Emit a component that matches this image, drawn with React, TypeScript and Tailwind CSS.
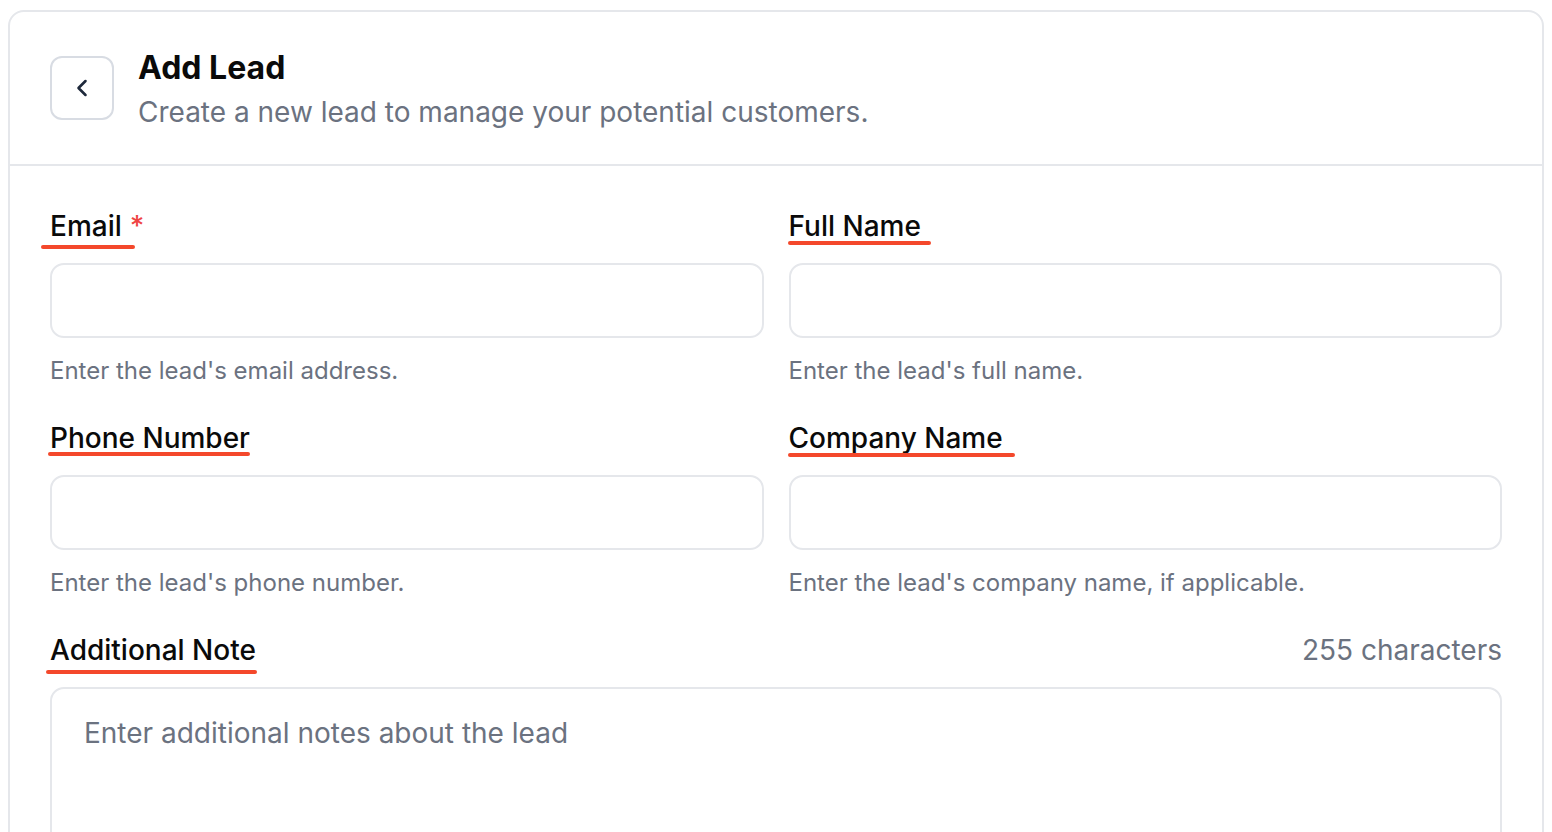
import { ChevronLeft } from 'lucide-react'

type FieldProps = {
  label: string
  helper: string
  required?: boolean
  mark: string
}

// hand-drawn red annotation under a label
function Mark({ className }: { className: string }) {
  return <span className={`absolute h-[4px] rounded-full bg-[#f4482b] ${className}`} />
}

function Field({ label, helper, required, mark }: FieldProps) {
  return (
    <div className="flex flex-col">
      <div className="relative self-start">
        <label className="block text-[28px] leading-[36px] font-medium text-[#0a0a0a]">
          {label}
          {required && <span className="ml-[8px] text-[#ef4444]">*</span>}
        </label>
        <Mark className={mark} />
      </div>
      <input className="mt-[19px] h-[75px] w-full rounded-[14px] border-2 border-[#e5e7eb] bg-white px-[24px] text-[26px] outline-none" />
      <p className="mt-[17px] text-[24px] leading-[32px] text-[#6b7280]">{helper}</p>
    </div>
  )
}

export default function App() {
  return (
    <div className="min-h-screen bg-white px-[8px] pt-[10px] font-['Inter',sans-serif]">
      <div className="rounded-[16px] border-2 border-[#e5e7eb] bg-white">
        {/* Header */}
        <div className="flex gap-[24px] border-b-2 border-[#e5e7eb] px-[40px] pt-[36px] pb-[32px]">
          <button className="mt-[8px] flex h-[64px] w-[64px] shrink-0 items-center justify-center rounded-[12px] border-2 border-[#d8dce3] text-[#1e293b]">
            <ChevronLeft size={28} strokeWidth={2.2} />
          </button>
          <div>
            <h1 className="text-[32px] leading-[40px] font-bold text-[#0a0a0a]">Add Lead</h1>
            <p className="mt-[4px] text-[28px] leading-[40px] text-[#6b7280]">
              Create a new lead to manage your potential customers.
            </p>
          </div>
        </div>

        {/* Form */}
        <div className="px-[40px] pt-[42px]">
          <div className="grid grid-cols-2 gap-x-[25px] gap-y-[33px]">
            <Field
              label="Email"
              required
              helper="Enter the lead's email address."
              mark="-left-[9px] w-[94px] top-[37px]"
            />
            <Field
              label="Full Name"
              helper="Enter the lead's full name."
              mark="-left-[1px] w-[143px] top-[33px]"
            />
            <Field
              label="Phone Number"
              helper="Enter the lead's phone number."
              mark="-left-[2px] w-[202px] top-[32px]"
            />
            <Field
              label="Company Name"
              helper="Enter the lead's company name, if applicable."
              mark="-left-[1px] w-[227px] top-[33px]"
            />
          </div>

          <div className="mt-[33px]">
            <div className="flex items-center justify-between">
              <div className="relative">
                <label className="block text-[28px] leading-[36px] font-medium text-[#0a0a0a]">
                  Additional Note
                </label>
                <Mark className="-left-[4px] w-[211px] top-[38px]" />
              </div>
              <span className="text-[28px] leading-[36px] text-[#6b7280]">255 characters</span>
            </div>
            <textarea
              placeholder="Enter additional notes about the lead"
              className="mt-[19px] block h-[220px] w-full resize-none rounded-[14px] border-2 border-[#e5e7eb] bg-white px-[32px] py-[24px] text-[28px] leading-[40px] text-[#0a0a0a] outline-none placeholder:text-[#6b7280]"
            />
          </div>
        </div>
      </div>
    </div>
  )
}
